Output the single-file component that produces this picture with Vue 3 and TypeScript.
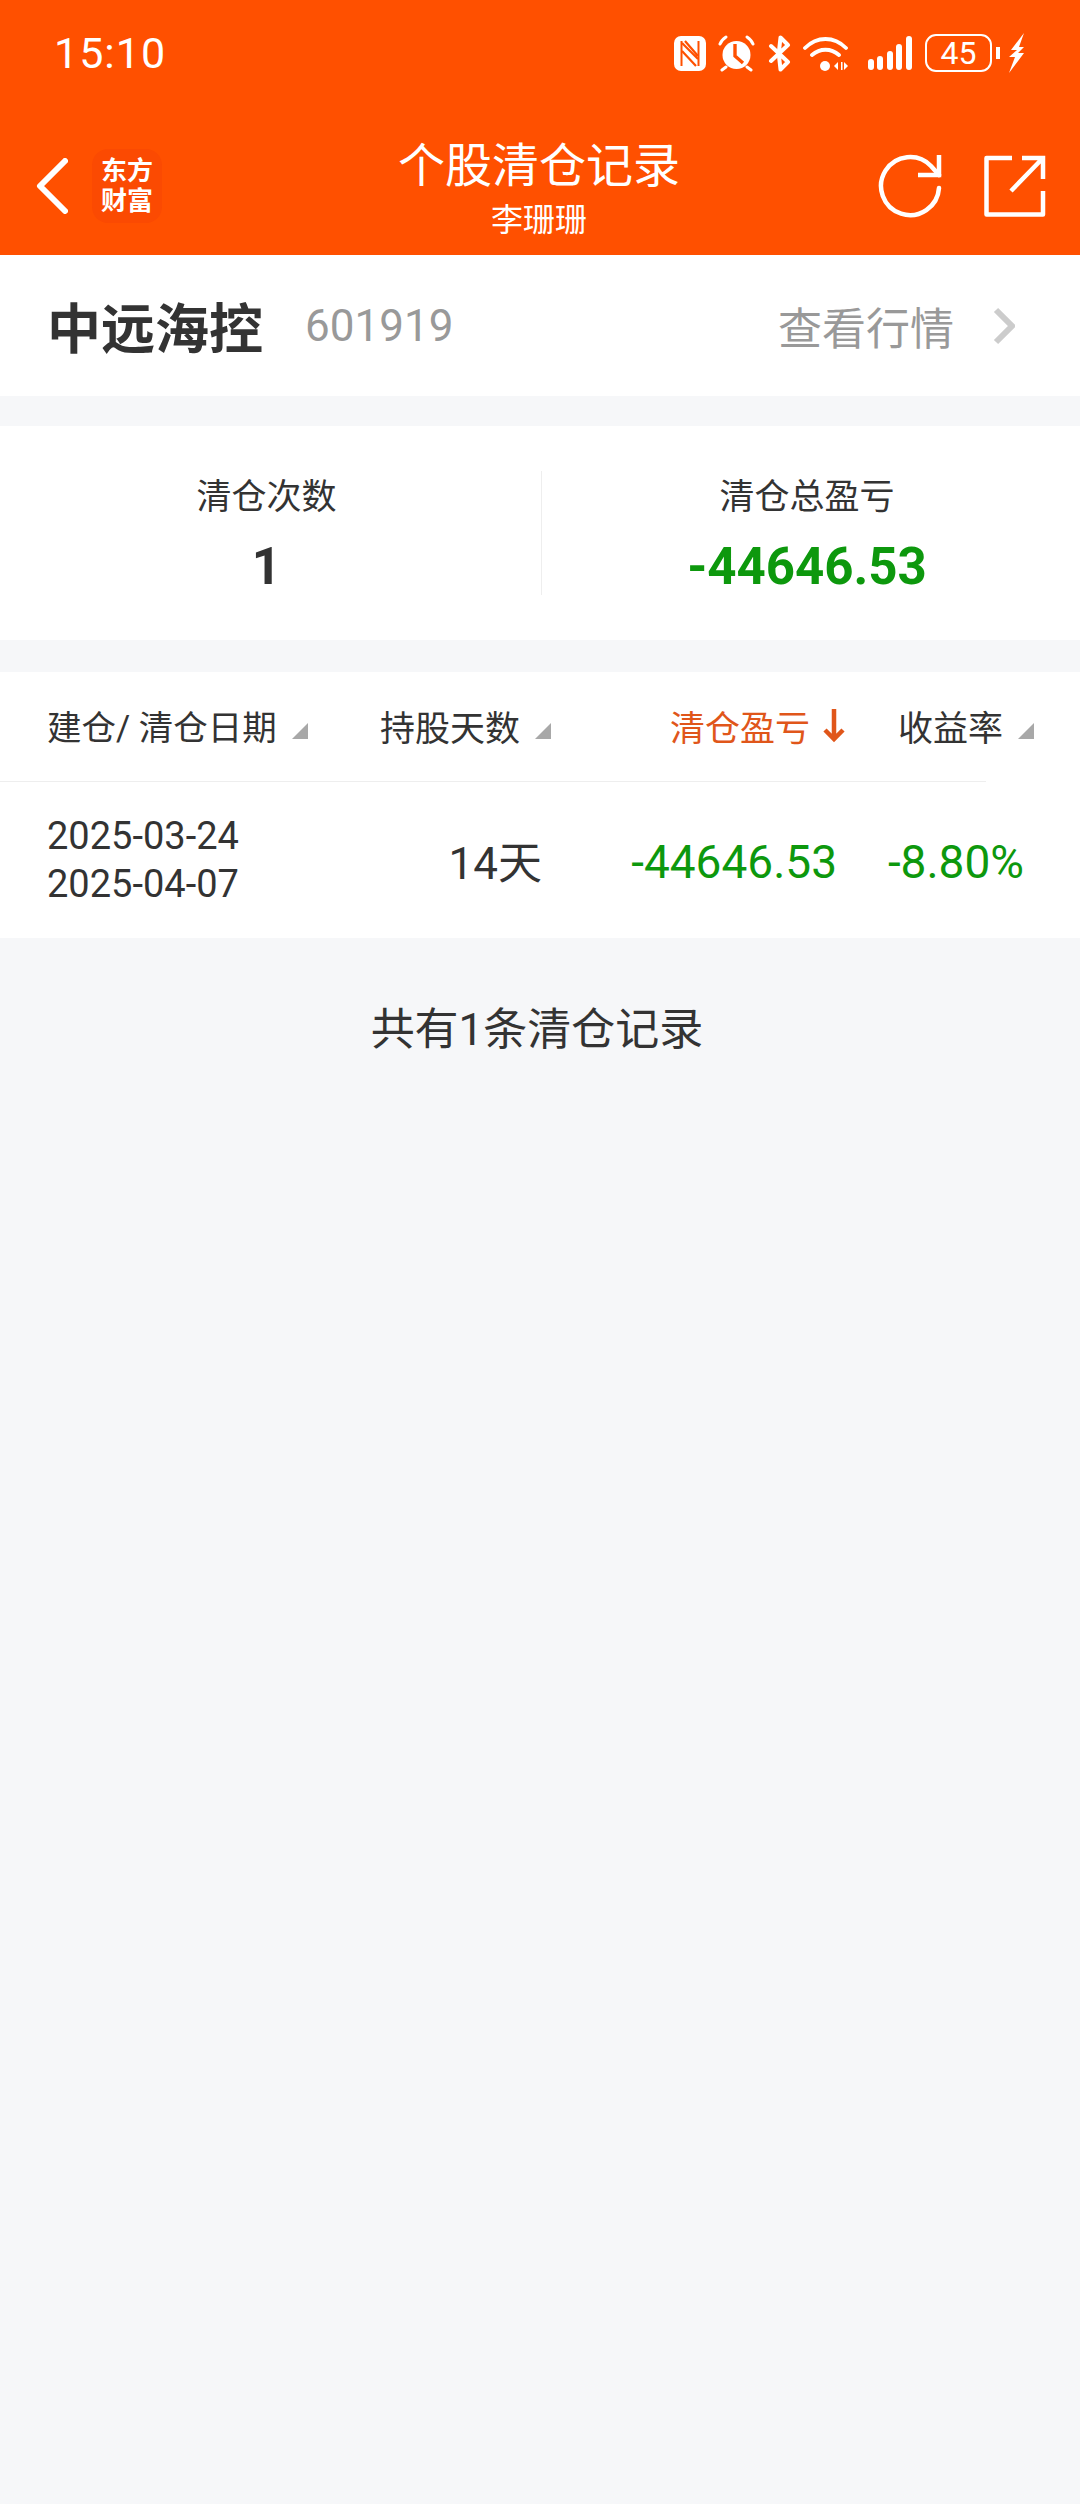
<script setup lang="ts">
const record = {
  opened: '2025-03-24',
  closed: '2025-04-07',
  days: '14天',
  pnl: '-44646.53',
  rate: '-8.80%',
}
</script>

<template>
  <div class="page">
    <header class="head">
      <div class="status">
        <span class="time">15:10</span>
        <div class="status-icons">
          <svg class="ic-nfc" width="32" height="35" viewBox="0 0 32 35" fill="none">
            <rect width="32" height="35" rx="7" fill="#fff" />
            <path d="M7.5 5v25M24.5 5v25" stroke="#ff5000" stroke-width="2" />
            <path d="M8 7l16 16M8 15l14 15M24 20L11 5" stroke="#ff5000" stroke-width="2.2" />
          </svg>
          <svg class="ic-alarm" width="37" height="37" viewBox="0 0 37 37" fill="none">
            <circle cx="18.5" cy="20" r="14" fill="#fff" />
            <path d="M17 9v12l8 7" stroke="#ff5000" stroke-width="3.4" />
            <path d="M2 9c1-3 3-5 6-7M35 9c-1-3-3-5-6-7M8 32l-4 3M29 32l4 3" stroke="#fff" stroke-width="3" stroke-linecap="round" />
          </svg>
          <svg class="ic-bt" width="23" height="37" viewBox="0 0 23 37" fill="none">
            <path d="M3 11l17 16-7.5 7.5L11 21" stroke="#fff" stroke-width="4" stroke-linejoin="round" stroke-linecap="round" />
            <path d="M3 26L20 10l-7.5-7.5L11 16" stroke="#fff" stroke-width="4" stroke-linejoin="round" stroke-linecap="round" />
          </svg>
          <svg class="ic-wifi" width="45" height="37" viewBox="0 0 45 37" fill="none">
            <path d="M2 13c12-12 29-12 41 0M9 20c8-7 19-7 27 0" stroke="#fff" stroke-width="3.8" stroke-linecap="round" />
            <circle cx="22" cy="31" r="5" fill="#fff" />
            <path d="M31 31l4-4v8zM38 27h1.500v8H38zM41 27l4 4-4 4z" fill="#fff" />
          </svg>
          <svg class="ic-signal" width="44" height="36" viewBox="0 0 44 36" fill="#fff">
            <rect x="0" y="24" width="6" height="11" rx="3" />
            <rect x="9" y="21" width="6" height="14" rx="3" />
            <rect x="19" y="16" width="6" height="19" rx="3" />
            <rect x="28" y="9" width="6" height="26" rx="3" />
            <rect x="38" y="1" width="6" height="34" rx="3" />
          </svg>
          <div class="battery"><span>45</span></div>
          <i class="nub"></i>
          <svg class="ic-bolt" width="16" height="40" viewBox="0 0 16 40" fill="#fff">
            <path d="M16 0L3 17h6l-8 7h6L1 40l15-20h-6l6-6h-5z" />
          </svg>
        </div>
      </div>
      <div class="nav">
        <div class="nav-left">
          <svg width="32" height="56" viewBox="0 0 32 56" fill="none">
            <path d="M29 3L4 28l25 25" stroke="#fff" stroke-width="6" stroke-linecap="round" stroke-linejoin="round" />
          </svg>
          <div class="logo">东方<br />财富</div>
        </div>
        <div class="title">
          <div class="title-main">个股清仓记录</div>
          <div class="title-sub">李珊珊</div>
        </div>
        <div class="nav-right">
          <svg width="66" height="66" viewBox="0 0 66 66" fill="none">
            <path d="M62 35a29 29 0 1 1-8-22l8 9" stroke="#fff" stroke-width="4.500" stroke-linecap="round" />
            <path d="M62 2v20H41" stroke="#fff" stroke-width="4.500" />
          </svg>
          <svg width="62" height="62" viewBox="0 0 62 62" fill="none">
            <path d="M28 3H2.500v56.500H59V36" stroke="#fff" stroke-width="4.500" stroke-linejoin="round" />
            <path d="M38 3h21v21M58 4L27 36" stroke="#fff" stroke-width="4.500" />
          </svg>
        </div>
      </div>
    </header>

    <section class="stock">
      <div class="stock-name">
        <b>中远海控</b>
        <span>601919</span>
      </div>
      <div class="stock-link">
        查看行情
        <svg width="22" height="38" viewBox="0 0 22 38" fill="none">
          <path d="M3 3l16 16L3 35" stroke="#ccc" stroke-width="6" />
        </svg>
      </div>
    </section>

    <section class="summary">
      <div class="sum-cell">
        <div class="sum-label">清仓次数</div>
        <div class="sum-value">1</div>
      </div>
      <div class="sum-cell sum-right">
        <div class="sum-label">清仓总盈亏</div>
        <div class="sum-value green">{{ record.pnl }}</div>
      </div>
    </section>

    <section class="table">
      <div class="thead">
        <div class="th th-date">建仓/ 清仓日期<i class="tri"></i></div>
        <div class="th th-days">持股天数<i class="tri"></i></div>
        <div class="th th-pnl">
          清仓盈亏
          <svg width="26" height="36" viewBox="0 0 26 36" fill="none">
            <path d="M13 2v30M4 23l9 9 9-9" stroke="#e0561a" stroke-width="4.500" />
          </svg>
        </div>
        <div class="th th-rate">收益率<i class="tri"></i></div>
      </div>
      <div class="tbody">
        <div class="td-date">{{ record.opened }}<br />{{ record.closed }}</div>
        <div class="td-days">{{ record.days }}</div>
        <div class="td-pnl green">{{ record.pnl }}</div>
        <div class="td-rate green">{{ record.rate }}</div>
      </div>
    </section>

    <p class="foot">共有1条清仓记录</p>
  </div>
</template>

<style>
body {
  background: #f6f7f9;
}
</style>

<style scoped>
.page {
  width: 1080px;
  min-height: 2504px;
  background: #f6f7f9;
  font-family: Roboto, "Noto Sans CJK SC", sans-serif;
  color: #333;
}
.head {
  height: 255px;
  background: #ff5000;
  color: #fff;
}
.status {
  height: 106px;
  display: flex;
  justify-content: space-between;
  align-items: center;
  padding: 0 56px 0 54px;
}
.time {
  font-size: 43px;
  letter-spacing: 1px;
}
.status-icons {
  display: flex;
  align-items: center;
}
.ic-alarm {
  margin-left: 12px;
}
.ic-bt {
  margin-left: 13px;
}
.ic-wifi {
  margin-left: 12px;
}
.ic-signal {
  margin-left: 20px;
}
.battery {
  width: 67px;
  height: 38px;
  margin-left: 13px;
  box-sizing: border-box;
  border: 2.5px solid #fff;
  border-radius: 11px;
  display: flex;
  align-items: center;
  justify-content: center;
  font-size: 32px;
}
.nub {
  width: 4px;
  height: 12px;
  background: #fff;
  margin: 0 8px 0 4px;
}
.nav {
  height: 149px;
  box-sizing: border-box;
  padding: 10px 34px 0 36px;
  display: grid;
  grid-template-columns: 1fr auto 1fr;
  align-items: center;
}
.nav-left {
  display: flex;
  align-items: center;
  gap: 24px;
}
.logo {
  width: 70px;
  height: 74px;
  background: #fb4a02;
  border-radius: 16px;
  font-size: 26px;
  line-height: 30px;
  font-weight: 700;
  text-align: center;
  padding-top: 7px;
  box-sizing: border-box;
}
.title {
  text-align: center;
  padding: 4px 4px 0 0;
}
.title-main {
  font-size: 47px;
  line-height: 56px;
}
.title-sub {
  margin-top: 8px;
  font-size: 32px;
  line-height: 36px;
}
.nav-right {
  display: flex;
  align-items: center;
  justify-content: flex-end;
  gap: 41px;
}
.stock {
  height: 141px;
  background: #fff;
  display: flex;
  align-items: center;
  justify-content: space-between;
  padding: 0 65px 0 47px;
}
.stock-name {
  display: flex;
  align-items: center;
  gap: 42px;
}
.stock-name b {
  font-size: 54px;
  font-weight: 700;
}
.stock-name span {
  font-size: 44px;
  color: #999;
}
.stock-link {
  display: flex;
  align-items: center;
  gap: 39px;
  font-size: 44px;
  color: #999;
}
.summary {
  margin-top: 30px;
  height: 214px;
  background: #fff;
  display: grid;
  grid-template-columns: 541px 1fr;
  align-items: center;
}
.sum-cell {
  box-sizing: border-box;
  padding: 6px 8px 0 0;
  text-align: center;
}
.sum-right {
  border-left: 1px solid #eee;
  height: 124px;
  display: flex;
  flex-direction: column;
  justify-content: center;
}
.sum-label {
  font-size: 35px;
  line-height: 48px;
}
.sum-value {
  margin-top: 13px;
  font-size: 51px;
  line-height: 64px;
  font-weight: 700;
}
.green {
  color: #0d980d;
}
.table {
  margin-top: 32px;
  background: #fff;
}
.thead {
  height: 110px;
  box-sizing: border-box;
  padding-bottom: 4px;
  display: flex;
  align-items: center;
  position: relative;
  font-size: 35px;
}
.thead::after {
  content: "";
  position: absolute;
  left: 0;
  right: 94px;
  bottom: 0;
  height: 1px;
  background: #eee;
}
.th {
  display: flex;
  align-items: center;
}
.th-date {
  width: 380px;
  padding-left: 47px;
  box-sizing: border-box;
  font-size: 34.5px;
}
.th-days {
  width: 290px;
}
.th-pnl {
  width: 228px;
  gap: 11px;
  color: #e0561a;
}
.th-rate {
  flex: 1;
}
.tri {
  width: 0;
  height: 0;
  margin: 12px 0 0 15px;
  border-style: solid;
  border-width: 0 0 16px 16px;
  border-color: transparent transparent #a8a8a8 transparent;
}
.tbody {
  height: 156px;
  display: flex;
  align-items: center;
}
.td-date {
  width: 380px;
  padding-left: 47px;
  box-sizing: border-box;
  font-size: 38px;
  line-height: 48px;
}
.td-days {
  width: 162px;
  text-align: right;
  font-size: 44px;
}
.td-pnl {
  width: 295px;
  padding-top: 4px;
  text-align: right;
  font-size: 46px;
}
.td-rate {
  width: 187px;
  padding-top: 4px;
  text-align: right;
  font-size: 46px;
}
.foot {
  margin: 0;
  padding: 64px 6px 0 0;
  text-align: center;
  font-size: 44px;
  line-height: 56px;
}
</style>
